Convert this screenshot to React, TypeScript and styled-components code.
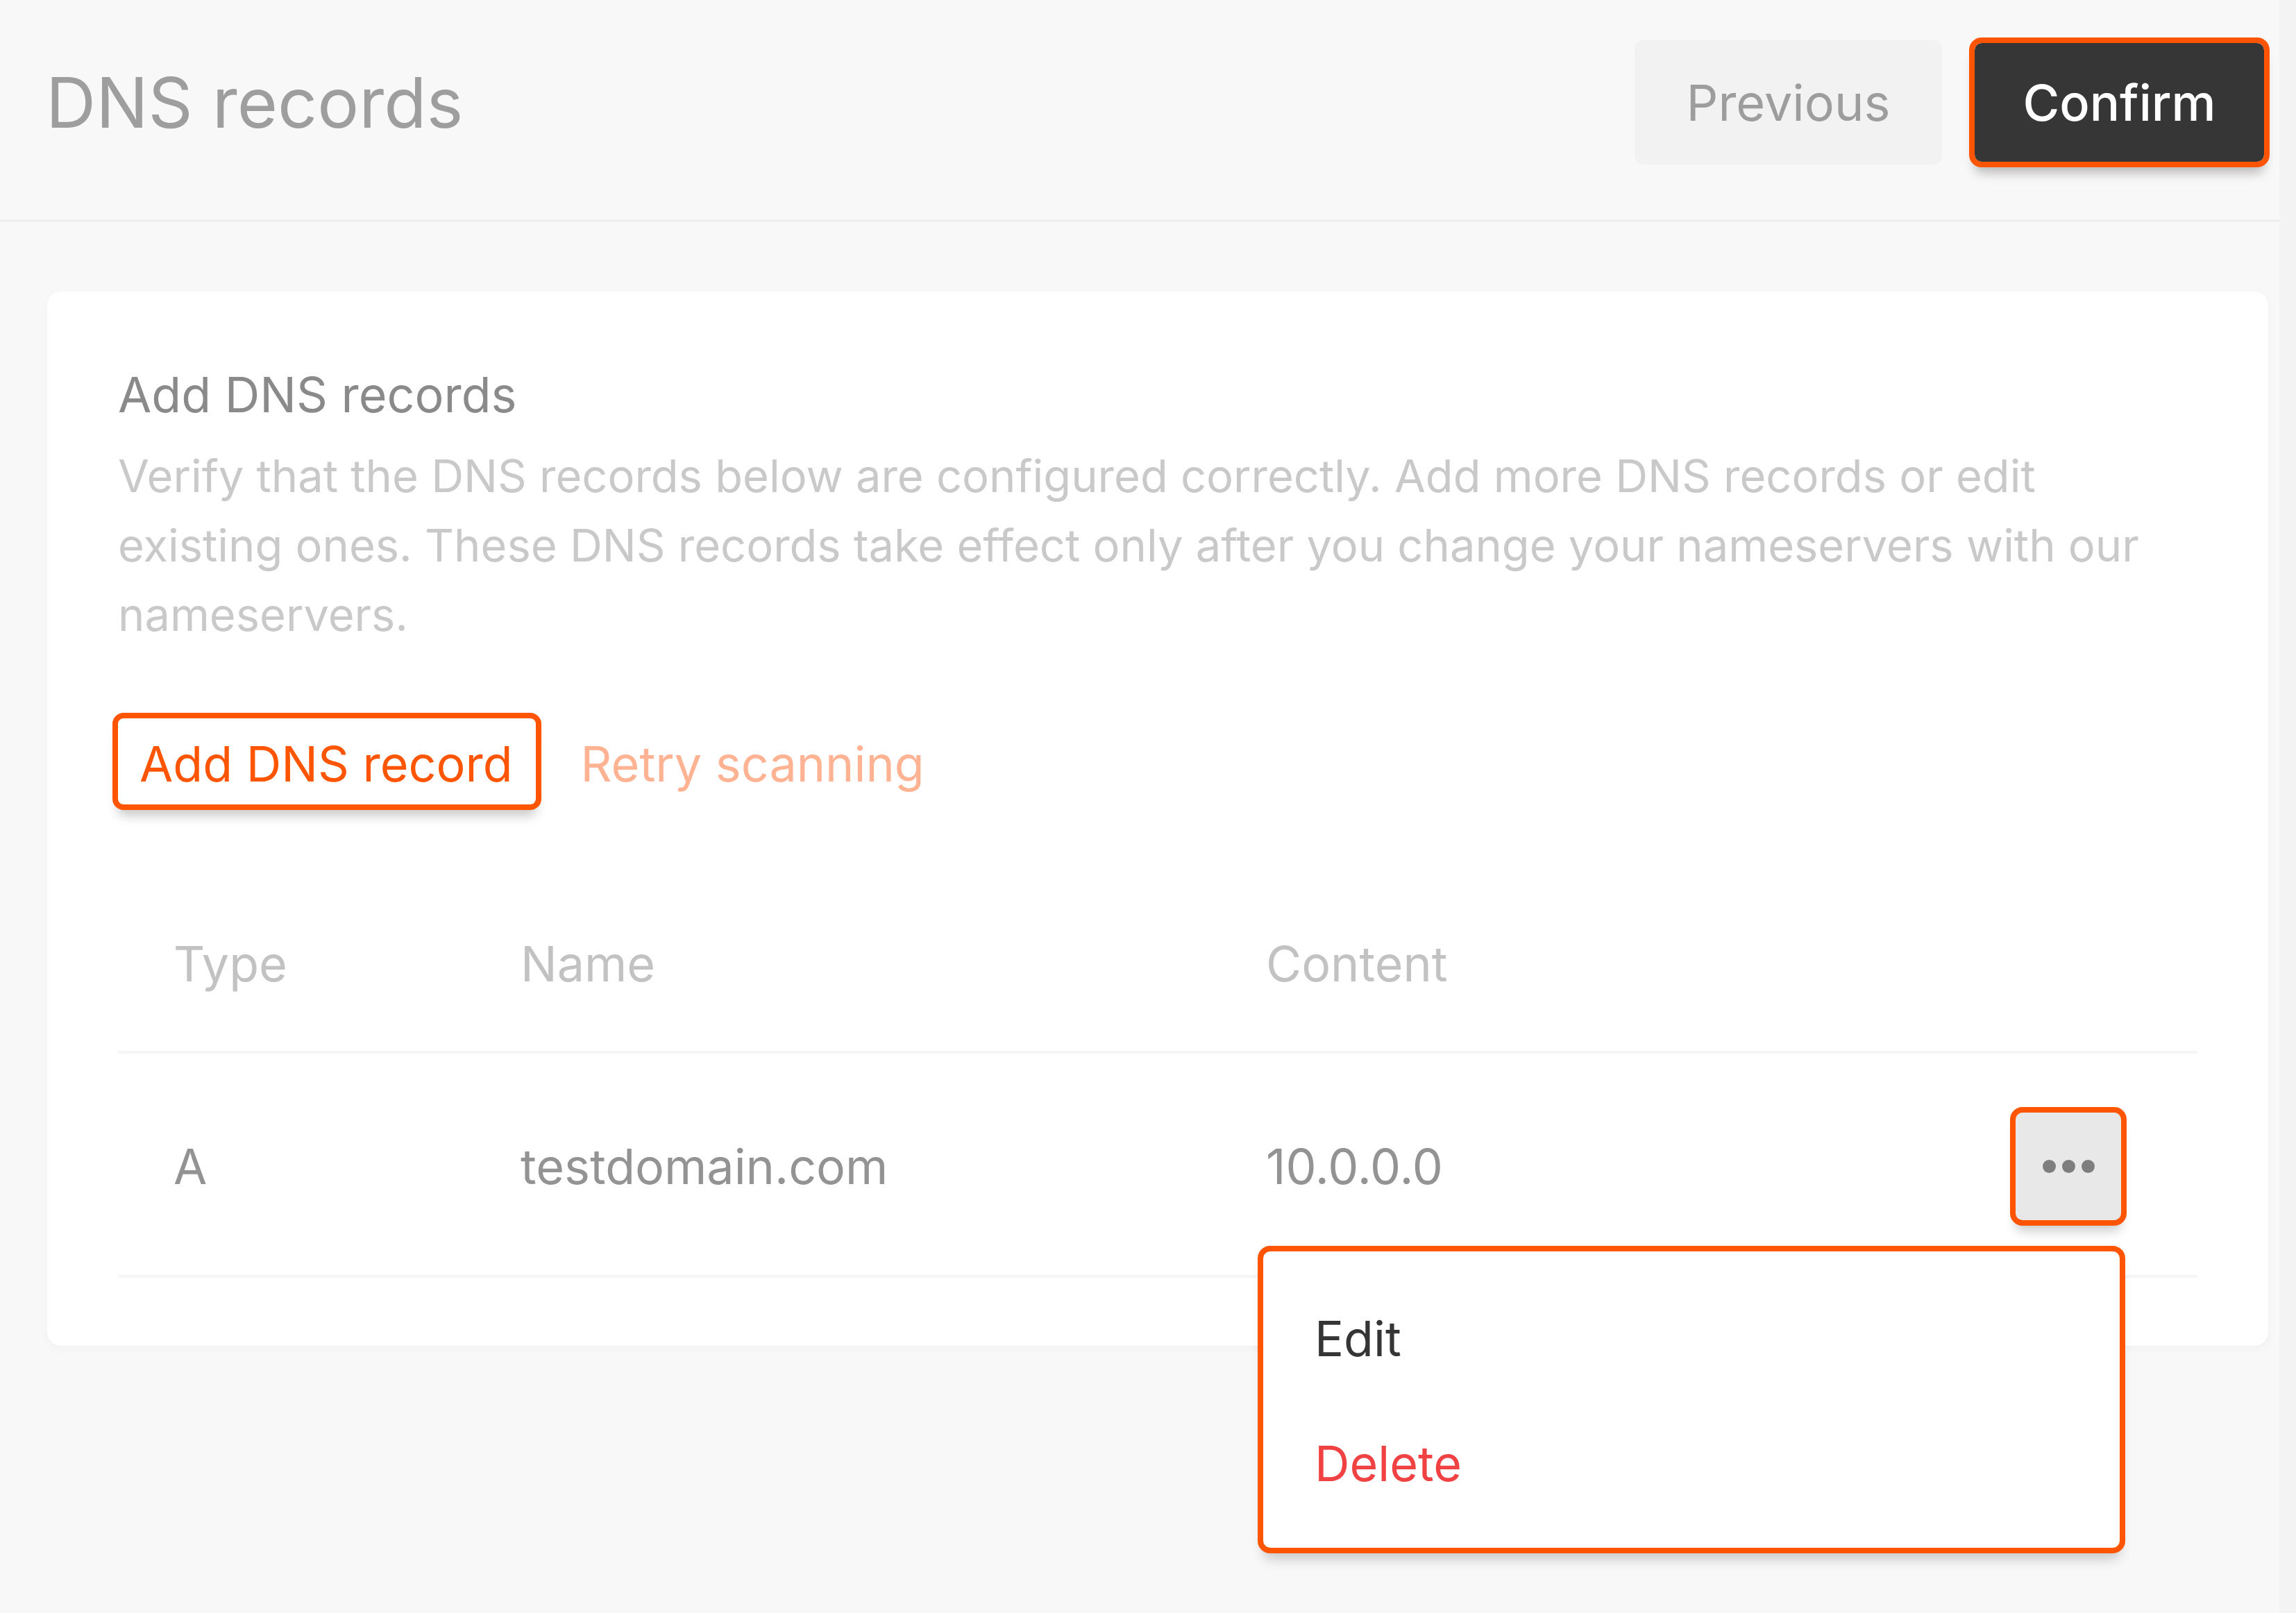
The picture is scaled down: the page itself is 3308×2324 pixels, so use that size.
import React from "react";
import styled, { createGlobalStyle } from "styled-components";

const GlobalStyle = createGlobalStyle`
  html, body {
    margin: 0;
    padding: 0;
    background: #f8f8f8;
  }
  body {
    font-family: Inter, "Noto Sans", "Liberation Sans", sans-serif;
    -webkit-font-smoothing: antialiased;
  }
  * { box-sizing: border-box; }
`;

const ORANGE = "#ff5500";

const Page = styled.div`
  display: flex;
  min-height: 100vh;
  background: #f8f8f8;
`;

const Main = styled.div`
  flex: 1;
  display: flex;
  flex-direction: column;
`;

const ScrollTrack = styled.div`
  width: 24px;
  flex-shrink: 0;
  background: #f3f3f3;
`;

const Header = styled.header`
  height: 320px;
  display: flex;
  align-items: center;
  justify-content: space-between;
  padding: 0 22px 21px 66px;
  border-bottom: 4px solid #efefef;
`;

const PageTitle = styled.h1`
  margin: 0;
  font-size: 100px;
  line-height: 1;
  font-weight: 400;
  color: #9e9e9e;
`;

const HeaderActions = styled.div`
  display: flex;
  align-items: center;
  gap: 47px;
`;

const SecondaryButton = styled.button`
  width: 443px;
  height: 179px;
  border: none;
  border-radius: 12px;
  background: #f2f2f2;
  color: #9d9d9d;
  font-family: inherit;
  font-size: 72px;
  font-weight: 400;
  cursor: pointer;
`;

const PrimaryButton = styled.button`
  width: 417px;
  height: 171px;
  border: none;
  outline: 8px solid ${ORANGE};
  border-radius: 10px;
  background: #363636;
  color: #ffffff;
  font-family: inherit;
  font-size: 72px;
  font-weight: 550;
  box-shadow: 0 16px 16px rgba(0, 0, 0, 0.26);
  cursor: pointer;
`;

const Content = styled.main`
  padding: 100px 16px 0 68px;
`;

const Card = styled.section`
  background: #ffffff;
  border-radius: 20px;
  box-shadow: 0 4px 14px rgba(0, 0, 0, 0.035);
  padding: 109px 102px 98px 102px;
`;

const SectionTitle = styled.h2`
  margin: 0;
  font-size: 70px;
  line-height: 80px;
  font-weight: 400;
  color: #8a8a8a;
`;

const Description = styled.p`
  margin: 27px 0 0 0;
  font-size: 65px;
  line-height: 100px;
  font-weight: 400;
  color: #c9c9c9;
`;

const ActionRow = styled.div`
  display: flex;
  align-items: center;
  gap: 33px;
  margin-top: 99px;
`;

const OutlineButton = styled.button`
  height: 124px;
  border: none;
  outline: 8px solid ${ORANGE};
  border-radius: 8px;
  background: #ffffff;
  color: ${ORANGE};
  font-family: inherit;
  font-size: 70px;
  line-height: 80px;
  font-weight: 400;
  padding: 26px 33px 18px 31px;
  box-shadow: 0 16px 16px rgba(0, 0, 0, 0.22);
  cursor: pointer;
`;

const TextButton = styled.button`
  height: 124px;
  border: none;
  background: transparent;
  color: #ffb392;
  font-family: inherit;
  font-size: 70px;
  line-height: 80px;
  font-weight: 400;
  padding: 26px 32px 18px 32px;
  cursor: pointer;
`;

const Table = styled.div`
  margin-top: 106px;
  display: flex;
  flex-direction: column;
`;

const Row = styled.div<{ $head?: boolean }>`
  display: grid;
  grid-template-columns: 500px 1074px 1fr auto;
  align-items: center;
  border-bottom: 4px solid #f6f6f6;
  padding: ${(p) => (p.$head ? "84px 0 85px 0" : "85px 0 79px 0")};
`;

const Cell = styled.div<{ $head?: boolean }>`
  padding-left: 80px;
  font-size: 70px;
  line-height: 80px;
  font-weight: 400;
  color: ${(p) => (p.$head ? "#c2c2c2" : "#939393")};
`;

const ActionsCell = styled.div`
  position: relative;
  padding-right: 110px;
`;

const KebabButton = styled.button`
  width: 152px;
  height: 155px;
  border: none;
  outline: 8px solid ${ORANGE};
  border-radius: 10px;
  background: #e8e8e8;
  display: flex;
  align-items: center;
  justify-content: center;
  gap: 9px;
  box-shadow: 0 16px 16px rgba(0, 0, 0, 0.2);
  cursor: pointer;
  padding: 0;
`;

const Dot = styled.span`
  width: 19px;
  height: 19px;
  border-radius: 50%;
  background: #7e7e7e;
`;

const Menu = styled.div`
  position: absolute;
  top: calc(100% + 45px);
  right: 112px;
  width: 1234px;
  background: #ffffff;
  outline: 8px solid ${ORANGE};
  border-radius: 10px;
  padding: 36px 0 31px 0;
  box-shadow: 0 16px 18px rgba(0, 0, 0, 0.2);
  z-index: 10;
`;

const MenuItem = styled.div<{ $danger?: boolean }>`
  padding: 50px 74px;
  font-size: 70px;
  line-height: 80px;
  font-weight: 400;
  color: ${(p) => (p.$danger ? "#f04242" : "#353535")};
  cursor: pointer;
`;

export default function App() {
  return (
    <>
      <GlobalStyle />
      <Page>
        <Main>
          <Header>
            <PageTitle>DNS records</PageTitle>
            <HeaderActions>
              <SecondaryButton>Previous</SecondaryButton>
              <PrimaryButton>Confirm</PrimaryButton>
            </HeaderActions>
          </Header>
          <Content>
            <Card>
              <SectionTitle>Add DNS records</SectionTitle>
              <Description>
                Verify that the DNS records below are configured correctly. Add more DNS
                records or edit existing ones. These DNS records take effect only after you
                change your nameservers with our nameservers.
              </Description>
              <ActionRow>
                <OutlineButton>Add DNS record</OutlineButton>
                <TextButton>Retry scanning</TextButton>
              </ActionRow>
              <Table>
                <Row $head>
                  <Cell $head>Type</Cell>
                  <Cell $head>Name</Cell>
                  <Cell $head>Content</Cell>
                  <div />
                </Row>
                <Row>
                  <Cell>A</Cell>
                  <Cell>testdomain.com</Cell>
                  <Cell>10.0.0.0</Cell>
                  <ActionsCell>
                    <KebabButton aria-label="More actions">
                      <Dot />
                      <Dot />
                      <Dot />
                    </KebabButton>
                    <Menu>
                      <MenuItem>Edit</MenuItem>
                      <MenuItem $danger>Delete</MenuItem>
                    </Menu>
                  </ActionsCell>
                </Row>
              </Table>
            </Card>
          </Content>
        </Main>
        <ScrollTrack />
      </Page>
    </>
  );
}
